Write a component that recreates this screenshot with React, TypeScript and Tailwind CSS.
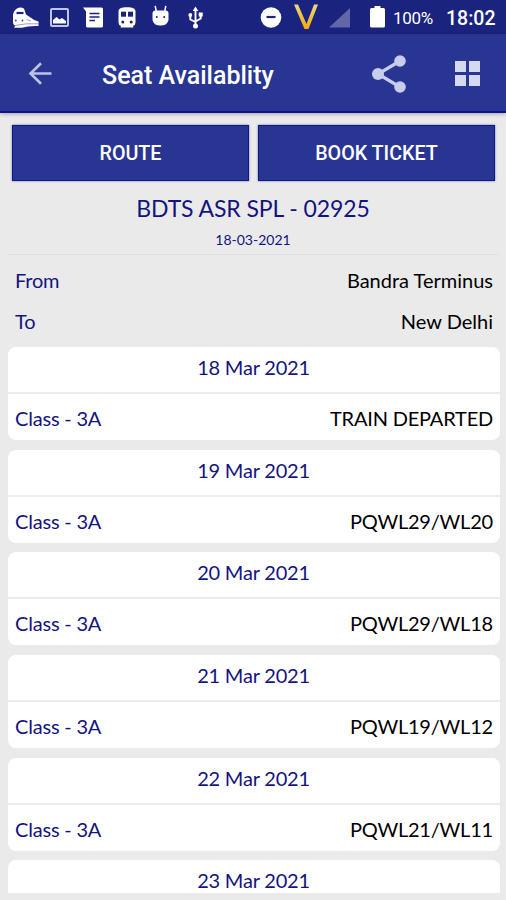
import React from 'react';

type Availability = {
  date: string;
  travelClass?: string;
  status?: string;
};

const AVAILABILITY: Availability[] = [
  { date: '18 Mar 2021', travelClass: '3A', status: 'TRAIN DEPARTED' },
  { date: '19 Mar 2021', travelClass: '3A', status: 'PQWL29/WL20' },
  { date: '20 Mar 2021', travelClass: '3A', status: 'PQWL29/WL18' },
  { date: '21 Mar 2021', travelClass: '3A', status: 'PQWL19/WL12' },
  { date: '22 Mar 2021', travelClass: '3A', status: 'PQWL21/WL11' },
  { date: '23 Mar 2021' },
];

const STATIONS = [
  { label: 'From', name: 'Bandra Terminus' },
  { label: 'To', name: 'New Delhi' },
];

function StatusBar() {
  return (
    <div className="flex h-[34px] shrink-0 items-start bg-[#1a237e] pl-3 font-['Roboto',sans-serif] text-white">
      {/* express train */}
      <svg className="mt-[7px] h-[21px] w-[27px] shrink-0" viewBox="0 0 27 21" fill="#fff">
        <path d="M5 1.500Q8.500 -.5 12 1.500L14 7.500L18.500 10.500Q22 13.500 26.500 14.500V19Q17 18.500 10 20.700H2L3.500 18.500Q1 18 1 15V8Q1.500 3.500 5 1.500Z" />
        <path d="M4.500 6H11.500" stroke="#1a237e" strokeWidth="2.200" />
        <path d="M2.500 18.600Q13 16 26 16.800" fill="none" stroke="#9a9fce" strokeWidth="1" />
        <path d="M14.500 12.500L19 14" stroke="#9a9fce" strokeWidth="1" />
        <circle cx="3.800" cy="13.500" r=".9" fill="#3c448f" />
        <circle cx="10.500" cy="13.500" r=".9" fill="#3c448f" />
      </svg>
      {/* picture */}
      <svg className="mt-[8px] ml-[11px] h-[19px] w-[19px] shrink-0" viewBox="0 0 19 19">
        <rect x="1" y="1" width="17" height="17" rx="1" fill="none" stroke="#c3c6e3" strokeWidth="2" />
        <path d="M3 15.500V12L6.500 9L9.500 11.500L12 10L16 13V15.500Z" fill="#fff" />
      </svg>
      {/* message */}
      <svg className="mt-[7px] ml-[14px] h-[21px] w-[21px] shrink-0" viewBox="0 0 21 21">
        <path d="M0 .5H18.500Q20 .5 20 2V19Q20 20.500 18.500 20.500H4.500Q3 20.500 3 19V4.500Z" fill="#fff" />
        <path d="M6.500 6.500H16.500M6.500 10H16.500M6.500 13.500H12" stroke="#1a237e" strokeWidth="1.500" />
      </svg>
      {/* subway */}
      <svg className="mt-[7px] ml-[14px] h-[21px] w-[18px] shrink-0" viewBox="0 0 18 21">
        <path d="M9 .3C14.500 .3 17.500 1.300 17.500 4.500V15.500Q17.500 18 15 19L15.500 20.500H2.500L3 19Q.5 18 .5 15.500V4.500C.5 1.300 3.500 .3 9 .3Z" fill="#fff" />
        <rect x="3" y="4.700" width="5" height="5" fill="#1a237e" />
        <rect x="10" y="4.700" width="5" height="5" fill="#1a237e" />
        <circle cx="4.800" cy="15" r="1.500" fill="#1a237e" />
        <circle cx="13.200" cy="15" r="1.500" fill="#1a237e" />
      </svg>
      {/* android head */}
      <svg className="mt-[5px] ml-[16px] h-[21px] w-[17px] shrink-0" viewBox="0 0 17 21">
        <path d="M3.200 .8L4.200 6M13.800 .8L12.800 6" stroke="#fff" strokeWidth="1.500" />
        <path d="M.5 8.500Q.5 5.500 3.500 5.500H13.500Q16.500 5.500 16.500 8.500V15Q15.500 20.500 8.500 20.500Q1.500 20.500 .5 15Z" fill="#fff" />
        <circle cx="4.800" cy="12" r="1" fill="#1a237e" />
        <circle cx="12.200" cy="12" r="1" fill="#1a237e" />
      </svg>
      {/* usb */}
      <svg className="mt-[6px] ml-[19px] h-[23px] w-[15px] shrink-0" viewBox="0 0 15 23">
        <path d="M7.500 3V20M7.500 16L2.300 13.500V9M7.500 15.500L12.700 12.500V7.500" fill="none" stroke="#fff" strokeWidth="1.900" />
        <path d="M7.500 .5L10.300 5H4.700Z" fill="#fff" />
        <circle cx="2.300" cy="9" r="1.900" fill="#fff" />
        <rect x="10.700" y="6.500" width="4" height="4" fill="#fff" />
        <circle cx="7.500" cy="20" r="2.500" fill="#fff" />
      </svg>

      {/* do not disturb */}
      <svg className="mt-[7px] ml-[57px] h-[22px] w-[22px] shrink-0" viewBox="0 0 22 22">
        <circle cx="11" cy="10.500" r="10.300" fill="#fff" />
        <path d="M6.500 10H15.500" stroke="#1a237e" strokeWidth="2.200" />
      </svg>
      {/* V */}
      <svg className="mt-[4px] ml-[12px] h-[26px] w-[24px] shrink-0" viewBox="0 0 24 26">
        <defs>
          <linearGradient id="vGold" x1="0" y1="0" x2="0" y2="1">
            <stop offset="0" stopColor="#ead98c" />
            <stop offset=".5" stopColor="#f0c13c" />
            <stop offset="1" stopColor="#f5a710" />
          </linearGradient>
        </defs>
        <path d="M0 .5H4L12.500 20L20 .5H24L14.500 25H10.500Z" fill="url(#vGold)" />
      </svg>
      {/* signal */}
      <svg className="mt-[8px] ml-[11px] h-[20px] w-[21px] shrink-0" viewBox="0 0 21 20">
        <path d="M21 0V19.500H0Z" fill="#6167a8" />
      </svg>
      {/* battery */}
      <svg className="mt-[6px] ml-[20px] h-[22px] w-[15px] shrink-0" viewBox="0 0 15 22">
        <path d="M4.500 0H10.500V2H13.500Q15 2 15 3.500V20Q15 21.500 13.500 21.500H1.500Q0 21.500 0 20V3.500Q0 2 1.500 2H4.500Z" fill="#fff" />
      </svg>
      <span className="mt-[6px] ml-[8px] w-[53px] text-[17px] leading-6 tracking-[-0.3px] whitespace-nowrap">100%</span>
      <span className="mt-[7px] text-[19.500px] leading-6 font-medium tracking-normal whitespace-nowrap">18:02</span>
    </div>
  );
}

function Toolbar() {
  return (
    <header className="z-10 flex h-[79px] shrink-0 items-center border-b-2 border-[#11118c] bg-[#283593] pt-[2px] pl-[28px] shadow-[0_1px_4px_rgba(0,0,0,0.3)]">
      <svg className="h-[23px] w-[24px] shrink-0" viewBox="0 0 24 23" fill="none" stroke="#bec3e6" strokeWidth="2.600">
        <path d="M23.500 11.500H3M13 1.200L2.500 11.500L13 21.800" />
      </svg>
      <h1 className="ml-[50px] w-[270px] pt-[4px] font-['Roboto',sans-serif] text-[25px] leading-8 font-medium tracking-normal whitespace-nowrap text-white">
        Seat Availablity
      </h1>
      <svg className="h-[38px] w-[35px] shrink-0" viewBox="0 0 35 38" fill="#c9cdec">
        <path d="M28 6L6 19L28 32" fill="none" stroke="#c9cdec" strokeWidth="3.200" />
        <circle cx="28" cy="6" r="5.800" />
        <circle cx="6" cy="19" r="6" />
        <circle cx="28" cy="32" r="5.800" />
      </svg>
      <svg className="ml-[48px] h-[25px] w-[25px] shrink-0" viewBox="0 0 25 25" fill="#d5d9f0">
        <rect width="11" height="11" />
        <rect x="14" width="11" height="11" />
        <rect y="14" width="11" height="11" />
        <rect x="14" y="14" width="11" height="11" />
      </svg>
    </header>
  );
}

function ActionButton({ children }: { children: React.ReactNode }) {
  return (
    <button className="h-[56px] flex-1 border border-[#10188a] bg-[#283593] pt-[2px] font-['Roboto',sans-serif] text-[19.700px] font-medium tracking-normal text-white shadow-[0_0_2px_rgba(20,24,120,0.6)]">
      {children}
    </button>
  );
}

function AvailabilityCard({ item }: { item: Availability }) {
  return (
    <div className="h-[93px] shrink-0 rounded-lg bg-white">
      <div className="flex h-[47px] items-center justify-center border-b-2 border-[#ececec] pr-px pb-[5px] text-[#14147f]">
        {item.date}
      </div>
      {item.status && (
        <div className="flex h-[46px] items-center justify-between px-[7px] pt-[2px]">
          <span className="text-[#14147f]">Class - {item.travelClass}</span>
          <span className="text-black">{item.status}</span>
        </div>
      )}
    </div>
  );
}

export default function App() {
  return (
    <div className="flex h-[900px] w-[506px] flex-col overflow-hidden bg-[#eaeaea] font-['Lato',sans-serif] text-[20px] leading-6 tracking-[-0.2px]">
      <StatusBar />
      <Toolbar />

      <div className="flex shrink-0 gap-[9px] pt-[12px] pr-[11px] pl-[12px]">
        <ActionButton>ROUTE</ActionButton>
        <ActionButton>BOOK TICKET</ActionButton>
      </div>

      <div className="mx-2 flex h-[74px] shrink-0 flex-col items-center border-b border-[#e0e0e0] pt-[11px] text-[#14147f]">
        <h2 className="text-[23px] leading-8 tracking-[-0.1px]">BDTS ASR SPL - 02925</h2>
        <span className="mt-[6px] text-[14px] leading-5 tracking-normal">18-03-2021</span>
      </div>

      <div className="shrink-0 pt-[4px] pr-[13px] pb-px pl-[15px]">
        {STATIONS.map((station) => (
          <div key={station.label} className="flex h-[41.500px] items-center justify-between">
            <span className="text-[#14147f]">{station.label}</span>
            <span className="tracking-normal text-black">{station.name}</span>
          </div>
        ))}
      </div>

      <div className="mt-[4px] mr-[6px] mb-[7px] ml-[8px] flex min-h-0 flex-1 flex-col gap-[9.700px] overflow-hidden">
        {AVAILABILITY.map((item) => (
          <AvailabilityCard key={item.date} item={item} />
        ))}
      </div>
    </div>
  );
}
